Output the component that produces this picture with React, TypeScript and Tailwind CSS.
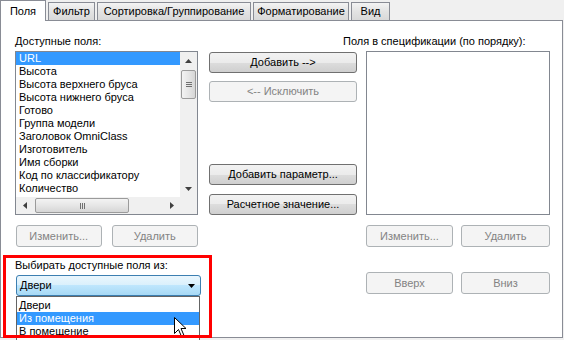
import React from "react";

const fields = [
  "URL",
  "Высота",
  "Высота верхнего бруса",
  "Высота нижнего бруса",
  "Готово",
  "Группа модели",
  "Заголовок OmniClass",
  "Изготовитель",
  "Имя сборки",
  "Код по классификатору",
  "Количество",
];

const options = ["Двери", "Из помещения", "В помещение"];

const Btn = ({
  label,
  disabled,
  className = "",
}: {
  label: string;
  disabled?: boolean;
  className?: string;
}) => (
  <div
    className={
      "flex items-center justify-center rounded-[3px] border leading-[13px] " +
      (disabled
        ? "border-[#adb2b5] bg-[#f4f4f4] text-[#838383] "
        : "border-[#707070] bg-[linear-gradient(#f2f2f2,#ebebeb_50%,#dddddd_50%,#cfcfcf)] text-black ") +
      className
    }
  >
    {label}
  </div>
);

const Arrow = ({ dir }: { dir: "up" | "down" | "left" | "right" }) => {
  const pts = {
    up: "0,4 7,4 3.5,0",
    down: "0,0 7,0 3.5,4",
    left: "4,0 4,7 0,3.5",
    right: "0,0 0,7 4,3.5",
  }[dir];
  const vert = dir === "up" || dir === "down";
  return (
    <svg width={vert ? 7 : 4} height={vert ? 4 : 7} viewBox={vert ? "0 0 7 4" : "0 0 4 7"}>
      <polygon points={pts} fill="#404040" />
    </svg>
  );
};

const Tab = ({ label, w }: { label: string; w: string }) => (
  <div
    className={
      "ml-[2px] mt-[2px] flex h-[18px] items-center justify-center border border-b-0 border-[#898c95] bg-[linear-gradient(#f3f3f3,#e3e3e3_50%,#d9d9d9)] " +
      w
    }
  >
    {label}
  </div>
);

export default function App() {
  return (
    <div
      className="h-[340px] w-[564px] overflow-hidden bg-[#f0f0f0] text-[11px] leading-[13px] text-black"
      style={{ fontFamily: '"Liberation Sans", Arial, sans-serif' }}
    >
      {/* tabs */}
      <div className="relative z-10 flex h-[20px] items-start">
        <div className="flex h-[21px] w-[46px] items-start justify-center border border-b-0 border-[#898c95] bg-white pt-[4px]">
          Поля
        </div>
        <Tab label="Фильтр" w="w-[47px]" />
        <Tab label="Сортировка/Группирование" w="w-[154px]" />
        <Tab label="Форматирование" w="w-[96px]" />
        <Tab label="Вид" w="w-[39px]" />
      </div>

      {/* panel */}
      <div className="flex h-[318px] w-[563px] items-start border border-[#898c95] bg-white pl-[14px]">
        {/* left column */}
        <div className="flex w-[183px] flex-col">
          <div className="mt-[14px] h-[13px] whitespace-nowrap">Доступные поля:</div>
          <div className="mt-[3px] flex h-[164px] w-[183px] flex-col border border-[#828790]">
            <div className="flex h-[145px]">
              <div className="w-[164px] overflow-hidden">
                {fields.map((f, i) => (
                  <div
                    key={f}
                    className={
                      "h-[13px] whitespace-nowrap pl-[3px] " +
                      (i === 0 ? "bg-[#3399ff] text-white" : "")
                    }
                  >
                    {f}
                  </div>
                ))}
              </div>
              <div className="flex w-[17px] flex-col bg-[#f0f0f0]">
                <div className="flex h-[17px] items-center justify-center">
                  <Arrow dir="up" />
                </div>
                <div className="mx-[1px] mt-[1px] flex h-[29px] flex-col items-center justify-center gap-[1px] rounded-[2px] border border-[#9b9b9b] bg-[linear-gradient(90deg,#f3f3f3,#e6e6e6_50%,#d6d6d6)]">
                  <div className="h-[1px] w-[6px] bg-[#707070]" />
                  <div className="h-[1px] w-[6px] bg-[#707070]" />
                  <div className="h-[1px] w-[6px] bg-[#707070]" />
                </div>
                <div className="flex-1" />
                <div className="flex h-[17px] items-center justify-center">
                  <Arrow dir="down" />
                </div>
              </div>
            </div>
            <div className="flex h-[17px]">
              <div className="flex w-[164px] items-center bg-[#f0f0f0]">
                <div className="flex w-[17px] justify-center">
                  <Arrow dir="left" />
                </div>
                <div className="ml-[2px] flex h-[15px] w-[94px] items-center justify-center gap-[1px] rounded-[2px] border border-[#9b9b9b] bg-[linear-gradient(#f3f3f3,#e6e6e6_50%,#d6d6d6)]">
                  <div className="h-[6px] w-[1px] bg-[#707070]" />
                  <div className="h-[6px] w-[1px] bg-[#707070]" />
                  <div className="h-[6px] w-[1px] bg-[#707070]" />
                </div>
                <div className="flex-1" />
                <div className="flex w-[17px] justify-center">
                  <Arrow dir="right" />
                </div>
              </div>
              <div className="w-[17px] bg-[#f0f0f0]" />
            </div>
          </div>
          <div className="mt-[10px] flex gap-[10px] pl-[1px]">
            <Btn label="Изменить..." disabled className="h-[22px] w-[86px]" />
            <Btn label="Удалить" disabled className="h-[22px] w-[87px]" />
          </div>

          {/* highlighted selector */}
          <div className="relative -ml-[12px] mt-[8px] h-[83px] w-[209px] pl-[12px] pt-[4px]">
            <div className="h-[13px] whitespace-nowrap">Выбирать доступные поля из:</div>
            <div className="relative ml-[1px] mt-[3px] flex h-[21px] w-[185px] items-center justify-between rounded-[3px] border border-[#3c7fb1] bg-[linear-gradient(#eaf6fd,#d9f0fc_50%,#bee6fd_50%,#a7d9f5)] pl-[3px] pr-[5px]">
              <span>Двери</span>
              <svg width="7" height="4" viewBox="0 0 7 4">
                <polygon points="0,0 7,0 3.5,4" fill="#000" />
              </svg>
              <div className="absolute left-[-1px] top-[20px] z-10 h-[45px] w-[184px] border border-[#646464] bg-white pt-[2px]">
                {options.map((o, i) => (
                  <div
                    key={o}
                    className={
                      "h-[13px] whitespace-nowrap pl-[2px] " +
                      (i === 1 ? "bg-[#3399ff] text-white" : "")
                    }
                  >
                    {o}
                  </div>
                ))}
                <svg
                  className="absolute left-[157px] top-[20px]"
                  width="13"
                  height="21"
                  viewBox="0 0 13 21"
                >
                  <path
                    d="M0.5 0.5 L0.5 16.5 L4.5 12.5 L7.5 19.5 L10 18.5 L7 11.5 L12 11.5 Z"
                    fill="#fff"
                    stroke="#000"
                    strokeWidth="1"
                  />
                </svg>
              </div>
            </div>
            <div className="pointer-events-none absolute inset-0 z-20 border-[3px] border-[#ff0000]" />
          </div>
        </div>

        {/* middle column */}
        <div className="ml-[11px] flex w-[148px] flex-col pt-[31px]">
          <Btn label="Добавить -->" className="h-[21px]" />
          <Btn label="<-- Исключить" disabled className="mt-[8px] h-[21px]" />
          <Btn label="Добавить параметр..." className="mt-[62px] h-[21px]" />
          <Btn label="Расчетное значение..." className="mt-[9px] h-[21px]" />
        </div>

        {/* right column */}
        <div className="ml-[9px] flex w-[184px] flex-col">
          <div className="-ml-[23px] mt-[14px] h-[13px] whitespace-nowrap">
            Поля в спецификации (по порядку):
          </div>
          <div className="mt-[3px] h-[164px] w-[184px] border border-[#828790]" />
          <div className="mt-[10px] flex gap-[8px]">
            <Btn label="Изменить..." disabled className="h-[22px] w-[87px]" />
            <Btn label="Удалить" disabled className="h-[22px] w-[89px]" />
          </div>
          <div className="mt-[25px] flex gap-[8px]">
            <Btn label="Вверх" disabled className="h-[22px] w-[87px]" />
            <Btn label="Вниз" disabled className="h-[22px] w-[89px]" />
          </div>
        </div>
      </div>
    </div>
  );
}
